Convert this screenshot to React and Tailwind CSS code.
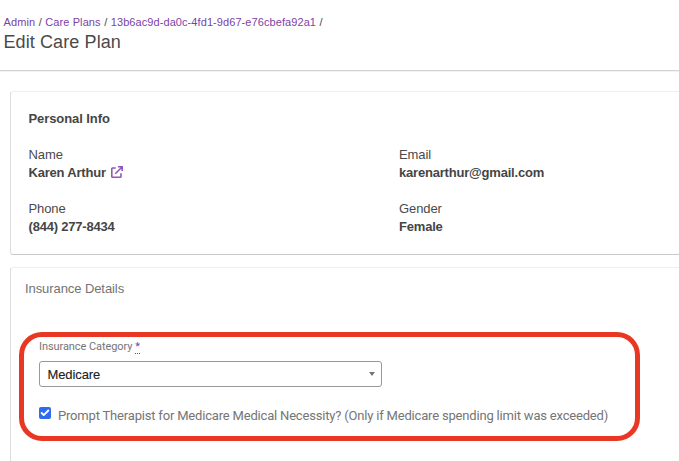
import React from "react";
import { Check } from "lucide-react";

function ExternalLinkIcon() {
  return (
    <svg
      className="-mt-[2px] ml-[5px] h-[12px] w-[12px] shrink-0"
      viewBox="0 0 12 12"
      fill="none"
      stroke="#9157bd"
      strokeWidth="1.6"
    >
      <path d="M4.8 2H1.5a.7.7 0 0 0-.7.7v7.8c0 .4.3.7.7.7h7.8c.4 0 .7-.3.7-.7V7.2" />
      <path d="M7 .8h4.2V5M11 1 4.3 7.7" />
    </svg>
  );
}

function Field({ label, value, children }) {
  return (
    <div className="h-[54px] leading-[18px]">
      <div className="tracking-[-0.1px] text-[#4a4a4a]">{label}</div>
      <div className="flex items-center font-bold tracking-[-0.2px] text-[#454545]">
        {value}
        {children}
      </div>
    </div>
  );
}

export default function App() {
  return (
    <div className="h-[461px] w-[679px] overflow-hidden bg-white font-['Liberation_Sans',sans-serif] text-[13px] text-[#4a4a4a]">
      <header className="h-[71px] border-b border-[#d2d2d2] pl-[3.5px] pt-[15px] shadow-[0_1px_0_#f2f2f2]">
        <nav className="flex h-[14px] gap-[3.5px] whitespace-nowrap text-[11px] leading-[14px]">
          <a className="tracking-[0.1px] text-[#7b3fa8]">Admin</a>
          <span>/</span>
          <a className="tracking-[0.1px] text-[#7b3fa8]">Care Plans</a>
          <span>/</span>
          <a className="tracking-[0.08px] text-[#7b3fa8]">13b6ac9d-da0c-4fd1-9d67-e76cbefa92a1</a>
          <span>/</span>
        </nav>
        <h1 className="mt-[2px] text-[18px] leading-[22px] tracking-[0.1px]">Edit Care Plan</h1>
      </header>

      <main className="ml-[10px] pt-[20px]">
        <section className="-mr-[10px] h-[164px] rounded-[3px] border border-b-[#c8cac8] border-l-[#dcdcdc] border-t-[#efefef] pl-[17.5px] pt-[18px]">
          <h2 className="h-[36px] font-bold leading-[18px] tracking-[-0.08px] text-[#454545]">Personal Info</h2>
          <div className="grid grid-cols-[370.5px_1fr]">
            <Field label="Name" value="Karen Arthur">
              <ExternalLinkIcon />
            </Field>
            <Field label="Email" value="karenarthur@gmail.com" />
            <Field label="Phone" value="(844) 277-8434" />
            <Field label="Gender" value="Female" />
          </div>
        </section>

        <section className="-mr-[10px] mt-[12px] h-[220px] rounded-t-[3px] border border-l-[#dcdcdc] border-t-[#efefef] pl-[8px] pt-[12px]">
          <h2 className="pl-[6px] leading-[18px] tracking-[-0.08px] text-[#737373]">Insurance Details</h2>
          <div className="mt-[34px] h-[109px] w-[621px] rounded-[23px] border-[5px] border-[#e83823] pl-[15px] pt-[3px] font-[Roboto,sans-serif]">
            <div className="flex h-[13px] gap-[3px] text-[11px] leading-[13px] text-[#757575]">
              <span className="tracking-[-0.08px]">Insurance Category</span>
              <span className="h-[14px] border-b border-dotted border-[#7b3fa8] text-[#7b3fa8]">*</span>
            </div>
            <div className="mt-[8px] flex h-[26px] w-[343px] items-center justify-between rounded-[3px] border border-[#999] pl-[7.5px] pr-[6px] text-[13px] text-[#202020]">
              <span className="pt-[2px] font-['Liberation_Sans',sans-serif] leading-[18px] tracking-[-0.1px] [-webkit-text-stroke:0.1px_#202020]">
                Medicare
              </span>
              <svg className="h-[4px] w-[6px]" viewBox="0 0 6 4" fill="#757575">
                <path d="M0 0h6L3 4z" />
              </svg>
            </div>
            <label className="mt-[19px] flex whitespace-nowrap text-[13px] leading-[18px] text-[#757575]">
              <span className="mt-[1px] flex h-[12px] w-[12px] items-center justify-center rounded-[2px] bg-[#2f6bee]">
                <Check className="h-[10px] w-[10px] text-white" strokeWidth={4.5} />
              </span>
              <span className="ml-[7px] pt-[1px] tracking-[-0.185px]">
                Prompt Therapist for Medicare Medical Necessity? (Only if Medicare spending limit was exceeded)
              </span>
            </label>
          </div>
        </section>
      </main>
    </div>
  );
}
